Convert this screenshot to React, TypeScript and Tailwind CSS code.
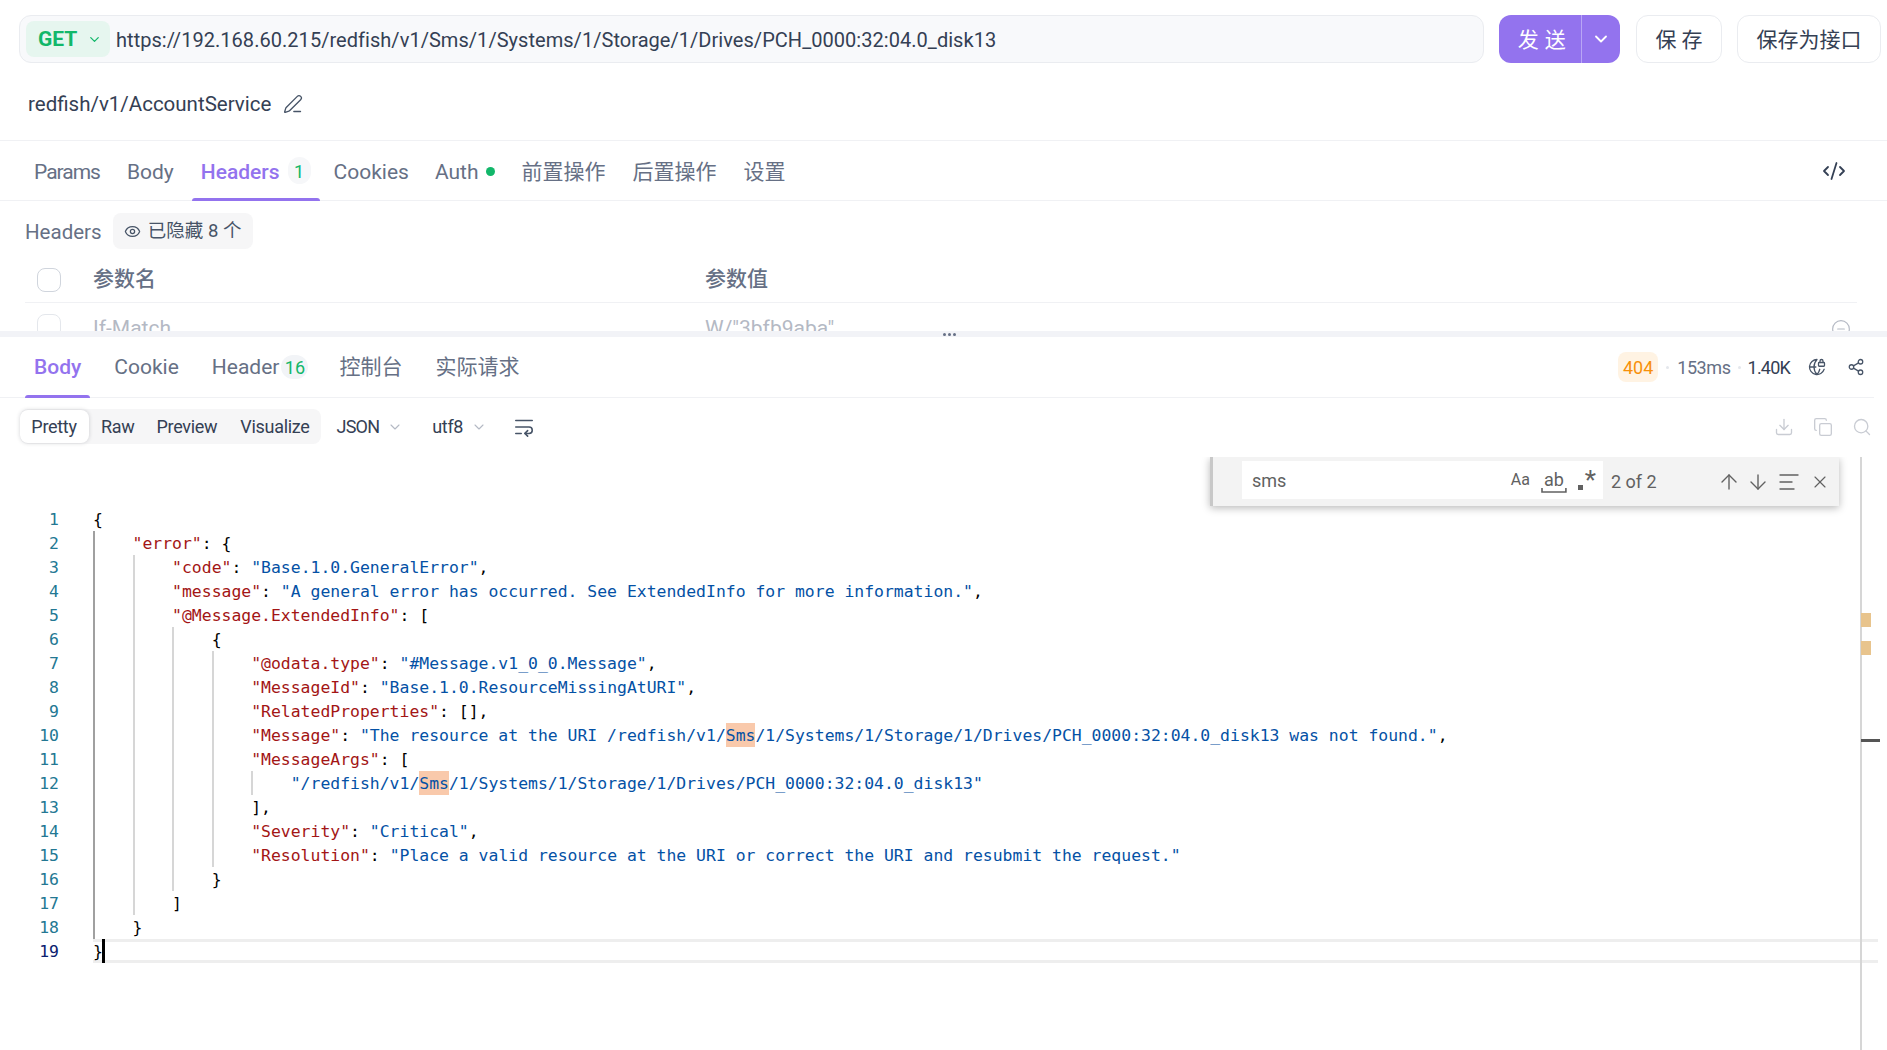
import React from "react";
import { ChevronDown, CodeXml, Eye, PenLine, GlobeLock, Share2, Download, Copy, Search, ArrowUp, ArrowDown, X, CircleMinus, WrapText, AlignLeft } from "lucide-react";

type Tok = [string, string, boolean?];
const K = "text-[#a31515]";
const S = "text-[#0451a5]";
const P = "text-[#000000]";

const lines: { level: number; toks: Tok[] }[] = [
  { level: 0, toks: [[P, "{"]] },
  { level: 1, toks: [[K, '"error"'], [P, ": {"]] },
  { level: 2, toks: [[K, '"code"'], [P, ": "], [S, '"Base.1.0.GeneralError"'], [P, ","]] },
  { level: 2, toks: [[K, '"message"'], [P, ": "], [S, '"A general error has occurred. See ExtendedInfo for more information."'], [P, ","]] },
  { level: 2, toks: [[K, '"@Message.ExtendedInfo"'], [P, ": ["]] },
  { level: 3, toks: [[P, "{"]] },
  { level: 4, toks: [[K, '"@odata.type"'], [P, ": "], [S, '"#Message.v1_0_0.Message"'], [P, ","]] },
  { level: 4, toks: [[K, '"MessageId"'], [P, ": "], [S, '"Base.1.0.ResourceMissingAtURI"'], [P, ","]] },
  { level: 4, toks: [[K, '"RelatedProperties"'], [P, ": [],"]] },
  { level: 4, toks: [[K, '"Message"'], [P, ": "], [S, '"The resource at the URI /redfish/v1/'], [S, "Sms", true], [S, '/1/Systems/1/Storage/1/Drives/PCH_0000:32:04.0_disk13 was not found."'], [P, ","]] },
  { level: 4, toks: [[K, '"MessageArgs"'], [P, ": ["]] },
  { level: 5, toks: [[S, '"/redfish/v1/'], [S, "Sms", true], [S, '/1/Systems/1/Storage/1/Drives/PCH_0000:32:04.0_disk13"']] },
  { level: 4, toks: [[P, "],"]] },
  { level: 4, toks: [[K, '"Severity"'], [P, ": "], [S, '"Critical"'], [P, ","]] },
  { level: 4, toks: [[K, '"Resolution"'], [P, ": "], [S, '"Place a valid resource at the URI or correct the URI and resubmit the request."']] },
  { level: 3, toks: [[P, "}"]] },
  { level: 2, toks: [[P, "]"]] },
  { level: 1, toks: [[P, "}"]] },
  { level: 0, toks: [[P, "}"]] },
];

function CodeLine({ n, level, toks }: { n: number; level: number; toks: Tok[] }) {
  const active = n === 19;
  return (
    <div className="flex h-[24px]">
      <div className={`w-[93px] shrink-0 pr-[34px] pt-[1px] text-right leading-[24px] ${active ? "text-[#0b216f]" : "text-[#237893]"}`}>{n}</div>
      <div className={`relative flex flex-1 whitespace-pre ${active ? "mr-[9px] border-y-[3px] border-[#eeeeee] leading-[18px]" : "leading-[24px]"}`}>
        {Array.from({ length: level }).map((_, i) => (
          <div key={i} className={`h-full w-[39.56px] shrink-0 border-l-[2px] ${i === 0 ? "border-[#a0a0a0]" : "border-[#d6d6d6]"}`} />
        ))}
        <div>
          {toks.map((t, i) => (
            <span key={i} className={`${t[0]} ${t[2] ? "inline-block h-[24px] bg-[#f9c9ab]" : ""}`}>
              <span className="relative top-[1px]">{t[1]}</span>
            </span>
          ))}
        </div>
        {active && <div className="absolute left-[9px] top-[-3px] h-[24px] w-[3px] bg-black" />}
      </div>
    </div>
  );
}

function Tab({ label, active, children, cls, low }: { label: string; active?: boolean; children?: React.ReactNode; cls?: string; low?: boolean }) {
  return (
    <div className={`relative flex h-full items-center text-[21px] ${active ? "text-[#9373ee]" : "text-[#667085]"} ${cls ?? ""}`}>
      <span className={low ? "pt-[4px]" : "pt-[2px]"}>{label}</span>
      {children}
      {active && <div className="absolute bottom-[-1px] left-[-9px] right-[-9px] h-[3px] rounded-t bg-[#9373ee]" />}
    </div>
  );
}

export default function App() {
  return (
    <div className="flex h-screen w-full flex-col overflow-hidden bg-white text-[20px] text-[#344054]" style={{ fontFamily: 'Roboto, "Noto Sans CJK SC", sans-serif' }}>
      {/* request bar */}
      <div className="flex h-[63px] shrink-0 items-end pl-[19px] pr-[6px]">
        <div className="flex h-[48px] w-[1466px] items-center rounded-[12px] border border-[#eaecf0] bg-[#f8f9fb] pl-[6px]">
          <div className="flex h-[36px] w-[84px] items-center rounded-[8px] bg-[#e6f6ef] pl-[12px] text-[21px] font-bold text-[#12b76a]">
            <span className="pt-[2px]">GET</span>
            <ChevronDown className="ml-[10px] h-[15px] w-[15px]" strokeWidth={2} />
          </div>
          <span className="ml-[6px] pt-[2px] tracking-[0.04px] text-[#344054]">https://192.168.60.215/redfish/v1/Sms/1/Systems/1/Storage/1/Drives/PCH_0000:32:04.0_disk13</span>
        </div>
        <div className="ml-[15px] flex h-[48px] w-[121px] overflow-hidden rounded-[12px] bg-[#9373ee] text-[21px] text-white">
          <div className="flex w-[83px] items-center justify-center border-r border-[#b9a6f5] pl-[9px] pt-[3px] tracking-[6px]">发送</div>
          <div className="flex flex-1 items-center justify-center"><ChevronDown className="h-[20px] w-[20px]" strokeWidth={2.2} /></div>
        </div>
        <div className="ml-[16px] flex h-[48px] w-[86px] items-center justify-center rounded-[12px] border border-[#eaecf0] pl-[5px] pt-[4px] text-[21px] tracking-[5px]">保存</div>
        <div className="ml-[15px] flex h-[48px] w-[144px] items-center justify-center rounded-[12px] border border-[#eaecf0] pt-[4px] text-[21px]">保存为接口</div>
      </div>

      {/* name */}
      <div className="flex h-[77px] shrink-0 items-center gap-[12px] pl-[28px] pt-[5px] text-[20.5px]">
        <span>redfish/v1/AccountService</span>
        <PenLine className="h-[20px] w-[20px] text-[#475467]" strokeWidth={1.6} />
      </div>

      {/* request tabs */}
      <div className="flex h-[61px] shrink-0 items-center gap-[27px] border-y border-[#f0f1f4] pl-[34px] pr-[41px]">
        <Tab label="Params" low cls="tracking-[-1px]" />
        <Tab label="Body" low />
        <Tab label="Headers" low active cls="font-medium text-[20.5px]">
          <span className="ml-[8px] flex h-[27px] w-[23px] items-center justify-center rounded-full bg-[#f6f7f9] pt-[2px] text-[18px] font-normal text-[#12b76a]">1</span>
        </Tab>
        <Tab label="Cookies" low cls="ml-[-4px]" />
        <Tab label="Auth" low cls="ml-[-1px]">
          <span className="ml-[7px] mt-[2px] h-[9px] w-[9px] rounded-full bg-[#12b76a]" />
        </Tab>
        <Tab label="前置操作" low />
        <Tab label="后置操作" low />
        <Tab label="设置" low />
        <CodeXml className="ml-auto h-[24px] w-[24px] text-[#344054]" strokeWidth={1.8} />
      </div>

      {/* headers panel */}
      <div className="relative h-[130px] shrink-0 overflow-hidden pl-[25px] pr-[30px]">
        <div className="flex h-[48px] items-center gap-[11px] pt-[12px]">
          <span className="pt-[2px] text-[20.5px] text-[#667085]">Headers</span>
          <div className="flex h-[36px] w-[140px] items-center justify-center gap-[7px] rounded-[8px] bg-[#f6f6f7] pt-[1px] text-[18.5px] text-[#475467]">
            <Eye className="h-[17px] w-[17px]" strokeWidth={1.8} />已隐藏 8 个
          </div>
        </div>
        <div className="flex h-[54px] items-center border-b border-[#f0f1f4] pt-[9px] text-[21px] font-medium text-[#667085]">
          <div className="ml-[12px] h-[24px] w-[24px] rounded-[8px] border border-[#d0d5dd]" />
          <span className="ml-[32px] w-[612px]">参数名</span>
          <span>参数值</span>
        </div>
        <div className="flex h-[50px] items-start pt-[11px] text-[21px] text-[#b4b9c4]">
          <div className="ml-[12px] h-[24px] w-[24px] shrink-0 rounded-[8px] border border-[#e4e7ec]" />
          <span className="ml-[32px] w-[612px] leading-[28px]">If-Match</span>
          <span className="leading-[28px]">W/"3bfb9aba"</span>
          <CircleMinus className="absolute right-[36px] top-[118px] h-[20px] w-[20px] text-[#b4b9c4]" strokeWidth={1.4} />
        </div>
      </div>

      {/* resize band */}
      <div className="relative h-[6px] shrink-0 bg-[#f2f3f7]">
        <div className="absolute left-[943px] top-[2px] flex gap-[2px]">
          <span className="h-[3px] w-[3px] rounded-full bg-[#667085]" />
          <span className="h-[3px] w-[3px] rounded-full bg-[#667085]" />
          <span className="h-[3px] w-[3px] rounded-full bg-[#667085]" />
        </div>
      </div>

      {/* response tabs */}
      <div className="mr-[13px] flex h-[61px] shrink-0 items-center border-b border-[#f0f1f4] pl-[34px] pr-[9px]">
        <Tab label="Body" active cls="font-medium" />
        <Tab label="Cookie" cls="ml-[33px]" />
        <Tab label="Header" cls="ml-[33px]">
          <span className="ml-[2px] flex h-[24px] w-[27px] items-center justify-center rounded-full bg-[#f2f4f7] pt-[1px] text-[18px] text-[#12b76a]">16</span>
        </Tab>
        <Tab label="控制台" cls="ml-[31px]" />
        <Tab label="实际请求" cls="ml-[33px]" />
        <div className="ml-auto flex h-[30px] w-[40px] items-center justify-center rounded-[8px] bg-[#fff3e3] text-[18px] text-[#f79009]">404</div>
        <span className="mx-[8px] h-[3px] w-[3px] rounded-full bg-[#e4e7ec]" />
        <span className="text-[18px] tracking-[-0.4px] text-[#667085]">153ms</span>
        <span className="mx-[7px] h-[3px] w-[3px] rounded-full bg-[#e4e7ec]" />
        <span className="text-[18px] tracking-[-0.8px]">1.40K</span>
        <GlobeLock className="ml-[18px] h-[18px] w-[18px] text-[#475467]" strokeWidth={1.7} />
        <Share2 className="ml-[21px] h-[18px] w-[18px] text-[#475467]" strokeWidth={1.7} />
      </div>

      {/* response toolbar */}
      <div className="mr-[13px] flex h-[59px] shrink-0 items-center pb-[2px] pl-[20px] pr-[2px] text-[18px] tracking-[-0.3px]">
        <div className="flex h-[35px] items-center rounded-[8px] bg-[#f6f6f7]">
          <div className="flex h-[33px] w-[69px] items-center justify-center rounded-[8px] bg-white pr-[1px] shadow-[0_0_4px_rgba(16,24,40,0.18)]">Pretty</div>
          <span className="ml-[12px]">Raw</span>
          <span className="ml-[22px]">Preview</span>
          <span className="ml-[23px] mr-[11px]">Visualize</span>
        </div>
        <span className="ml-[16px] tracking-[-0.8px]">JSON</span>
        <ChevronDown className="ml-[8px] h-[16px] w-[16px] text-[#b4b9c4]" strokeWidth={1.6} />
        <span className="ml-[29px]">utf8</span>
        <ChevronDown className="ml-[8px] h-[16px] w-[16px] text-[#b4b9c4]" strokeWidth={1.6} />
        <WrapText className="ml-[26px] h-[22px] w-[22px] text-[#475467]" strokeWidth={1.7} />
        <Download className="ml-auto h-[20px] w-[20px] text-[#c9ccd3]" strokeWidth={1.6} />
        <Copy className="ml-[19px] h-[20px] w-[20px] text-[#c9ccd3]" strokeWidth={1.6} />
        <Search className="ml-[19px] h-[20px] w-[20px] text-[#c9ccd3]" strokeWidth={1.6} />
      </div>

      {/* editor */}
      <div className="relative flex-1 overflow-hidden pt-[50px] text-[16.43px]" style={{ fontFamily: '"DejaVu Sans Mono", monospace' }}>
        {lines.map((l, i) => (
          <CodeLine key={i} n={i + 1} level={l.level} toks={l.toks} />
        ))}

        {/* overview ruler */}
        <div className="absolute bottom-0 left-[1860px] top-0 w-[2px] bg-[#d6d6d6]" />
        <div className="absolute left-[1861px] top-[156px] h-[14px] w-[10px] bg-[#e8c48d]" />
        <div className="absolute left-[1861px] top-[184px] h-[14px] w-[10px] bg-[#e8c48d]" />
        <div className="absolute left-[1861px] top-[282px] h-[3px] w-[19px] bg-[#555555]" />

        {/* find widget */}
        <div className="absolute left-[1210px] top-0 flex h-[49px] w-[629px] items-center border-l-[3px] border-[#c8c8c8] bg-[#f3f3f3] shadow-[0_2px_8px_rgba(0,0,0,0.28)]" style={{ fontFamily: 'Roboto, sans-serif' }}>
          <div className="ml-[29px] mt-[4px] flex h-[38px] w-[361px] shrink-0 items-center self-start bg-white pl-[10px] text-[18px] text-[#616161]">
            sms
            <span className="ml-auto text-[16px]">Aa</span>
            <span className="relative ml-[11px] px-[3px] text-[18px] leading-[20px]">
              ab
              <svg className="absolute bottom-[-3px] left-0 h-[5px] w-full" viewBox="0 0 26 5" preserveAspectRatio="none" fill="none" stroke="#616161" strokeWidth="1.6"><path d="M1 0v4h24V0" /></svg>
            </span>
            <span className="ml-[11px] mr-[7px] flex items-end text-[26px] leading-[22px]">
              <span className="mb-[1px] mr-[2px] h-[5px] w-[5px] bg-[#616161]" />
              <span className="h-[22px]">*</span>
            </span>
          </div>
          <span className="ml-[8px] text-[18px] text-[#616161]">2 of 2</span>
          <ArrowUp className="ml-[60px] h-[24px] w-[24px] text-[#616161]" strokeWidth={1.4} />
          <ArrowDown className="ml-[5px] h-[24px] w-[24px] text-[#616161]" strokeWidth={1.4} />
          <AlignLeft className="ml-[7px] h-[24px] w-[24px] text-[#616161]" strokeWidth={1.4} />
          <X className="ml-[9px] h-[20px] w-[20px] text-[#616161]" strokeWidth={1.4} />
        </div>
      </div>
    </div>
  );
}
